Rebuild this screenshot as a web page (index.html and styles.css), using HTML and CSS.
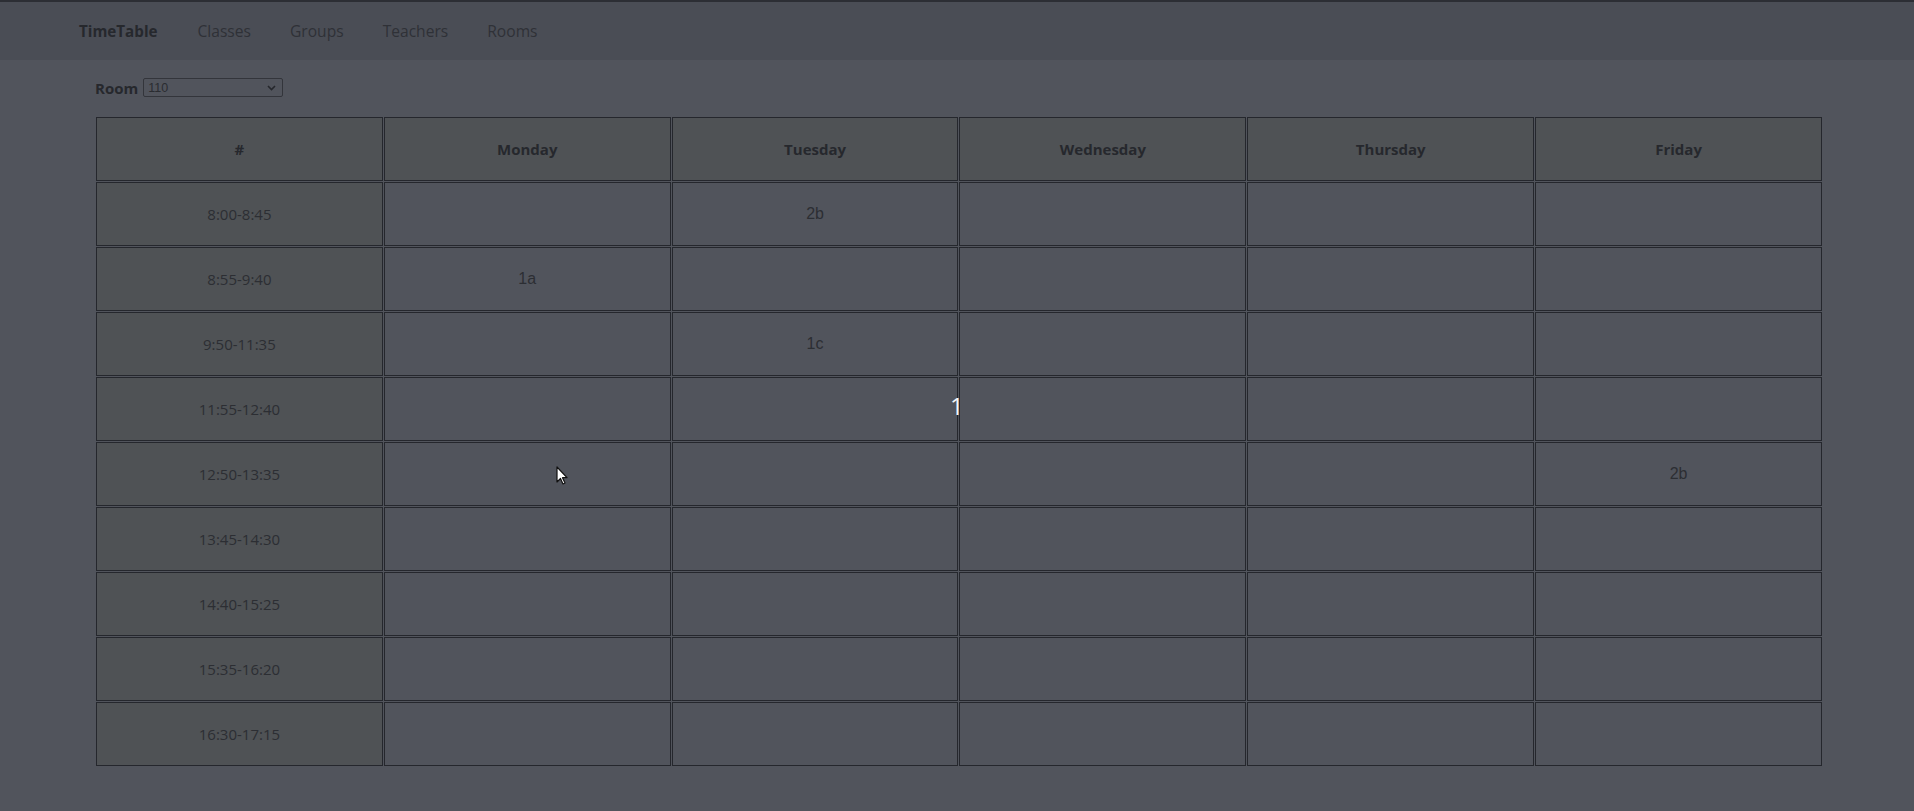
FILE: index.html
```html
<!DOCTYPE html>
<html lang="en">
<head>
<meta charset="utf-8">
<title>TimeTable</title>
<link rel="stylesheet" href="styles.css">
</head>
<body>
<nav class="navbar">
  <a class="brand" href="#">TimeTable</a>
  <a class="nav-link" href="#">Classes</a>
  <a class="nav-link" href="#">Groups</a>
  <a class="nav-link" href="#">Teachers</a>
  <a class="nav-link" href="#">Rooms</a>
</nav>
<main class="content">
  <div class="picker">
    <label class="picker-label" for="room">Room</label>
    <div class="select">
      <span class="select-value">110</span>
      <svg class="chev" width="9" height="6" viewBox="0 0 9 6"><path d="M1 1l3.5 3.5L8 1" fill="none" stroke="#25272c" stroke-width="1.6"/></svg>
    </div>
  </div>
  <table class="tt">
    <thead>
      <tr><th>#</th><th>Monday</th><th>Tuesday</th><th>Wednesday</th><th>Thursday</th><th>Friday</th></tr>
    </thead>
    <tbody>
      <tr><td class="time">8:00-8:45</td><td></td><td class="cls">2b</td><td></td><td></td><td></td></tr>
      <tr><td class="time">8:55-9:40</td><td class="cls">1a</td><td></td><td></td><td></td><td></td></tr>
      <tr><td class="time">9:50-11:35</td><td></td><td class="cls">1c</td><td></td><td></td><td></td></tr>
      <tr><td class="time">11:55-12:40</td><td></td><td></td><td></td><td></td><td></td></tr>
      <tr><td class="time">12:50-13:35</td><td></td><td></td><td></td><td></td><td class="cls">2b</td></tr>
      <tr><td class="time">13:45-14:30</td><td></td><td></td><td></td><td></td><td></td></tr>
      <tr><td class="time">14:40-15:25</td><td></td><td></td><td></td><td></td><td></td></tr>
      <tr><td class="time">15:35-16:20</td><td></td><td></td><td></td><td></td><td></td></tr>
      <tr><td class="time">16:30-17:15</td><td></td><td></td><td></td><td></td><td></td></tr>
    </tbody>
  </table>
</main>
<div class="overlay-num">1</div>
<svg class="cursor" width="13" height="20" viewBox="0 0 13 20"><path d="M1 1v15l3.5-3.5 2.5 5.5 2-1-2.5-5.3H11z" fill="#fff" stroke="#111" stroke-width="1.2" stroke-linejoin="round"/></svg>
</body>
</html>
```
FILE: styles.css
```css
html, body {
  margin: 0;
  padding: 0;
  background: #51545c;
  font-family: "Open Sans", "Noto Sans", sans-serif;
  color: #2a2c31;
  height: 100%;
}
.navbar {
  display: flex;
  align-items: center;
  height: 58px;
  border-top: 2px solid #2c2e34;
  background: #4a4d55;
  padding-left: 79px;
  gap: 39px;
}
.navbar a {
  text-decoration: none;
  font-size: 15.6px;
  color: #2f3137;
}
.navbar .brand {
  font-weight: 700;
  font-size: 15.2px;
  color: #26282d;
  margin-right: 1px;
}
.content {
  padding: 18px 91px 0 95px;
}
.picker {
  display: flex;
  align-items: center;
  gap: 5px;
  height: 19px;
}
.picker-label {
  font-weight: 700;
  font-size: 15px;
  color: #26282d;
}
.select {
  box-sizing: border-box;
  width: 140px;
  height: 19px;
  border: 1px solid #33353b;
  border-radius: 2px;
  display: flex;
  align-items: center;
  justify-content: space-between;
  padding: 0 6px 0 4px;
  font-family: "Liberation Sans", sans-serif;
  font-size: 12.5px;
  color: #2a2c31;
}
.tt {
  margin-top: 19px;
  width: 1728px;
  table-layout: fixed;
  border-collapse: separate;
  border-spacing: 1px;
}
.tt th, .tt td {
  border: 1px solid #25272d;
  height: 62px;
  padding: 0;
  text-align: center;
  vertical-align: middle;
}
.tt th {
  background: #4f5255;
  font-size: 15px;
  font-weight: 700;
  color: #26282d;
}
.tt td {
  background: #51545c;
  font-size: 15px;
  color: #2c2e33;
}
.tt td.time {
  background: #4f5255;
}
.tt td.cls {
  font-family: "Liberation Sans", Arial, sans-serif;
  font-size: 16px;
}
.overlay-num {
  position: absolute;
  left: 950px;
  top: 389px;
  font-family: "Open Sans", sans-serif;
  font-size: 24px;
  color: #f4f6f8;
}
.cursor {
  position: absolute;
  left: 556px;
  top: 466px;
}
```
